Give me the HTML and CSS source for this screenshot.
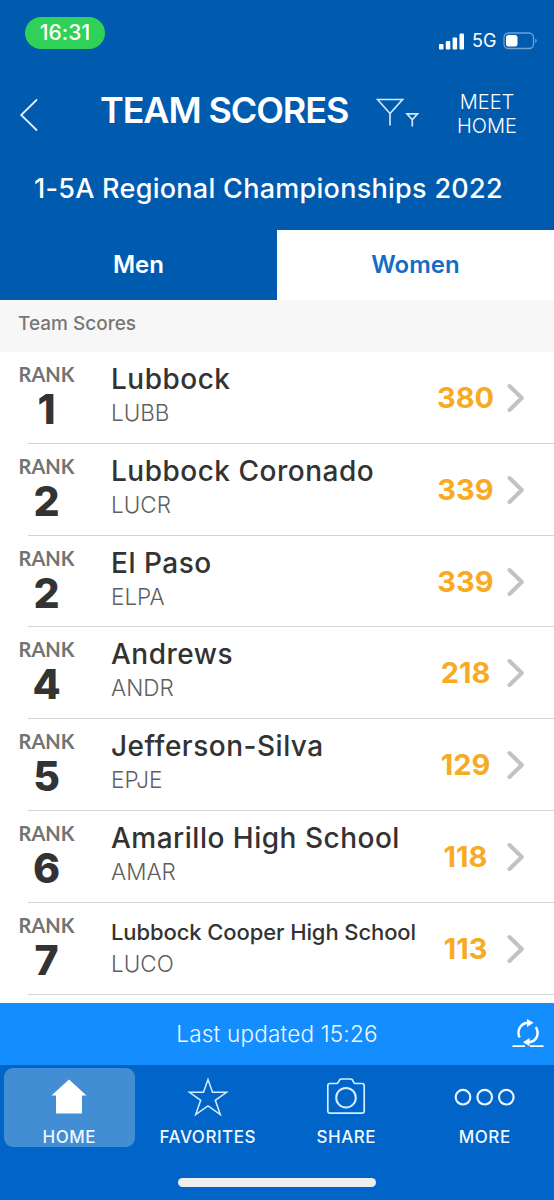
FILE: index.html
```html
<!DOCTYPE html>
<html lang="en">

<head>
    <meta charset="UTF-8">
    <title>Team Scores</title>
    <link rel="stylesheet" href="styles.css">
</head>

<body>
    <div class="app">
        <header class="header">
            <div class="status-bar">
                <span class="time">16:31</span>
                <div class="status-icons">
                    <svg width="26" height="17" viewBox="0 0 26 17" fill="#fff">
                        <rect x="0" y="11" width="4.5" height="5.5" rx="1" />
                        <rect x="6.8" y="8" width="4.5" height="8.5" rx="1" />
                        <rect x="13.6" y="4.5" width="4.5" height="12" rx="1" />
                        <rect x="20.5" y="0.5" width="4.5" height="16" rx="1" />
                    </svg>
                    <span class="network">5G</span>
                    <svg width="35" height="18" viewBox="0 0 35 18">
                        <rect x="1" y="1" width="29.5" height="15.5" rx="4.5" fill="none" stroke="#6fa3d4" stroke-width="1.3" />
                        <rect x="3" y="3" width="11.5" height="11.5" rx="2.5" fill="#fff" />
                        <path d="M32.3 6.3q3 2.4 0 5z" fill="#6fa3d4" />
                    </svg>
                </div>
            </div>
            <div class="nav">
                <svg class="back" width="20" height="34" viewBox="0 0 20 34" fill="none" stroke="#e4f2ff" stroke-width="1.8">
                    <path d="M18 1.5L2.2 17L18 32.5" />
                </svg>
                <h1>TEAM SCORES</h1>
                <svg class="filter" width="44" height="30" viewBox="0 0 44 30" fill="none" stroke="#cfe6fb" stroke-width="1.7">
                    <path d="M1.5 1.5h25L14 15.5zM14 15v12.5" />
                    <path d="M31 15.8h10.5l-5.2 6zM36.3 21.5v7" />
                </svg>
                <span class="meet-home">MEET<br>HOME</span>
            </div>
            <h2>1-5A Regional Championships 2022</h2>
        </header>

        <div class="tabs">
            <div class="tab">Men</div>
            <div class="tab active">Women</div>
        </div>

        <div class="section-title"><span>Team Scores</span></div>

        <div class="list" id="list"></div>

        <div class="updated">
            <span>Last updated 15:26</span>
            <svg class="refresh" width="32" height="30" viewBox="0 0 32 30" fill="none" stroke="#fff" stroke-width="2.4">
                <path d="M7.7 18.5C4.7 12.5 7.5 4.5 15.8 3.7" />
                <path d="M23.8 8.2C28 15 24.5 22.8 16.4 23.3" />
                <path d="M15 0l6.5 3.7L15 8zM17.5 19L11 23.2l6.5 4.1z" fill="#fff" stroke="none" />
                <path d="M.5 27.2h12.5M18 27.2h13.5" stroke-width="1.8" />
            </svg>
        </div>

        <footer class="tab-bar">
            <div class="tab-items">
                <div class="item selected">
                    <svg width="42" height="42" viewBox="0 0 42 42" fill="#fff">
                        <path d="M21 2.5L3.5 18.5H8V36.5h26V18.5h4.5z" />
                    </svg>
                    <span>HOME</span>
                </div>
                <div class="item">
                    <svg width="42" height="42" viewBox="0 0 42 42" fill="none" stroke="#d8edff" stroke-width="1.5">
                        <path d="M21 2.5L25.5 15.3H39.5L28.3 23.3L33.3 37.5L21 28.8L8.7 37.5L13.7 23.3L2.5 15.3H16.5z" />
                    </svg>
                    <span>FAVORITES</span>
                </div>
                <div class="item">
                    <svg width="42" height="42" viewBox="0 0 42 42" fill="none" stroke="#d8edff" stroke-width="1.7">
                        <path d="M5 6.5H11.5Q13 6.5 14 4L14.6 2.8Q15 2 16.5 2H25.5Q27 2 27.4 2.8L28 4Q29 6.5 30.5 6.5H37Q39.2 6.5 39.2 8.7V34Q39.2 36.2 37 36.2H5Q2.8 36.2 2.8 34V8.7Q2.8 6.5 5 6.5z" />
                        <circle cx="21" cy="20.7" r="9.8" stroke-width="2" />
                    </svg>
                    <span>SHARE</span>
                </div>
                <div class="item">
                    <svg width="62" height="42" viewBox="0 0 62 42" fill="none" stroke="#e8f5ff" stroke-width="2.2">
                        <circle cx="9" cy="20.2" r="7.3" />
                        <circle cx="30.7" cy="20.2" r="7.3" />
                        <circle cx="52.3" cy="20.2" r="7.3" />
                    </svg>
                    <span>MORE</span>
                </div>
            </div>
            <div class="home-indicator"></div>
        </footer>
    </div>

    <script>
        const teams = [
            { rank: 1, name: "Lubbock", code: "LUBB", score: 380 },
            { rank: 2, name: "Lubbock Coronado", code: "LUCR", score: 339 },
            { rank: 2, name: "El Paso", code: "ELPA", score: 339 },
            { rank: 4, name: "Andrews", code: "ANDR", score: 218 },
            { rank: 5, name: "Jefferson-Silva", code: "EPJE", score: 129 },
            { rank: 6, name: "Amarillo High School", code: "AMAR", score: 118 },
            { rank: 7, name: "Lubbock Cooper High School", code: "LUCO", score: 113 }
        ];
        const list = document.getElementById("list");

        teams.forEach(team => {
            const row = document.createElement("div");
            row.className = "row";
            // long names are set smaller so they stay on one line
            const nameClass = team.name.length > 22 ? "name small" : "name";
            row.innerHTML = `
                <div class="rank"><span class="label">RANK</span><span class="place">${team.rank}</span></div>
                <div class="team"><span class="${nameClass}">${team.name}</span><span class="code">${team.code}</span></div>
                <div class="score">${team.score}</div>
                <svg class="chevron" width="20" height="30" viewBox="0 0 20 30" fill="none" stroke="#c2c2c2" stroke-width="4" stroke-linecap="round" stroke-linejoin="round">
                    <path d="M3.5 3L15.8 15L3.5 27" />
                </svg>
            `;
            list.appendChild(row);
        });
    </script>
</body>

</html>
```

FILE: styles.css
```css
* {
    box-sizing: border-box;
}

body {
    margin: 0;
    font-family: Inter, sans-serif;
    background: #fff;
}

.app {
    width: 554px;
    height: 1200px;
    display: flex;
    flex-direction: column;
    overflow: hidden;
}

svg {
    display: block;
    flex: none;
}

.header {
    height: 230px;
    background: #005bae;
    color: #fff;
}

.status-bar {
    height: 72px;
    padding: 17px 16px 0 25px;
    display: flex;
    justify-content: space-between;
    align-items: flex-start;
}

.time {
    width: 80px;
    height: 32px;
    line-height: 32px;
    border-radius: 16px;
    background: #30d158;
    text-align: center;
    font-size: 21px;
    font-weight: 500;
    letter-spacing: 0.1px;
}

.status-icons {
    display: flex;
    align-items: center;
    margin-top: 14px;
}

.network {
    width: 38px;
    padding-left: 7px;
    font-size: 18px;
    line-height: 20px;
}

.nav {
    height: 86px;
    padding-left: 19px;
    display: flex;
}

.back {
    margin-top: 26px;
}

h1 {
    width: 250px;
    margin: 16px 0 0 61px;
    font-size: 36px;
    line-height: 44px;
    font-weight: 600;
    letter-spacing: -1.1px;
    white-space: nowrap;
}

.filter {
    margin: 26px 0 0 26px;
}

.meet-home {
    width: 80px;
    margin: 18px 0 0 27px;
    text-align: center;
    font-size: 20px;
    line-height: 24px;
    font-weight: 300;
}

h2 {
    margin: 14px 0 0 34px;
    font-size: 27px;
    line-height: 34px;
    font-weight: 500;
    letter-spacing: 0.28px;
    white-space: nowrap;
}

.tabs {
    display: flex;
    height: 69.5px;
}

.tab {
    flex: 1;
    background: #005bae;
    color: #fff;
    text-align: center;
    font-size: 24px;
    line-height: 69px;
    font-weight: 600;
}

.tab.active {
    background: #fff;
    color: #146cc4;
}

.section-title {
    height: 52.5px;
    padding-left: 18px;
    background: #f7f7f7;
    color: #777;
    font-size: 19px;
    line-height: 48px;
    font-weight: 500;
}

.list {
    flex: 1;
}

.row {
    position: relative;
    display: flex;
    height: 91.8px;
}

.row::after {
    content: "";
    position: absolute;
    left: 28px;
    right: 0;
    bottom: 0;
    height: 1px;
    background: #d4d4d4;
}

.rank {
    width: 93px;
    padding-top: 12px;
    display: flex;
    flex-direction: column;
    align-items: center;
}

.label {
    font-family: Lato, sans-serif;
    font-size: 20px;
    line-height: 21px;
    font-weight: 700;
    color: #737373;
}

.place {
    font-size: 41px;
    line-height: 48px;
    font-weight: 800;
    color: #333;
}

.team {
    width: 322px;
    padding: 10px 0 0 18px;
    white-space: nowrap;
}

.name,
.code {
    display: block;
}

.name {
    height: 34px;
    font-size: 28px;
    line-height: 34px;
    font-weight: 500;
    letter-spacing: 0.5px;
    color: #333;
}

.name.small {
    font-size: 22px;
    line-height: 39px;
    letter-spacing: -0.1px;
}

.code {
    font-size: 22.5px;
    line-height: 34px;
    font-weight: 300;
    color: #5f5f5f;
}

.score {
    width: 101px;
    text-align: center;
    font-size: 29px;
    line-height: 92px;
    font-weight: 700;
    color: #f7aa24;
}

.chevron {
    margin: 31px 0 0 -10px;
}

.updated {
    height: 62px;
    display: grid;
    grid-template-columns: 1fr auto 1fr;
    align-items: center;
    background: #148eff;
    color: #f0f8ff;
    font-size: 22.5px;
    line-height: 28px;
    font-weight: 300;
    letter-spacing: 0.2px;
}

.updated span {
    grid-column: 2;
    padding-bottom: 1px;
}

.refresh {
    justify-self: end;
    margin-right: 10px;
}

.tab-bar {
    height: 135px;
    background: #0064c8;
}

.tab-items {
    display: flex;
    height: 113px;
    padding-top: 3px;
}

.item {
    width: 25%;
    height: 79px;
    padding-top: 9px;
    display: flex;
    flex-direction: column;
    align-items: center;
    color: #f0f8ff;
    font-size: 17px;
    line-height: 22px;
    font-weight: 500;
    letter-spacing: 0.5px;
}

.item span {
    margin-top: 7px;
}

.item.selected {
    width: 131.5px;
    margin: 0 3.5px;
    background: #428dd4;
    border-radius: 9px;
}

.home-indicator {
    width: 198px;
    height: 9px;
    margin: 0 auto;
    border-radius: 5px;
    background: #eee;
}
```
